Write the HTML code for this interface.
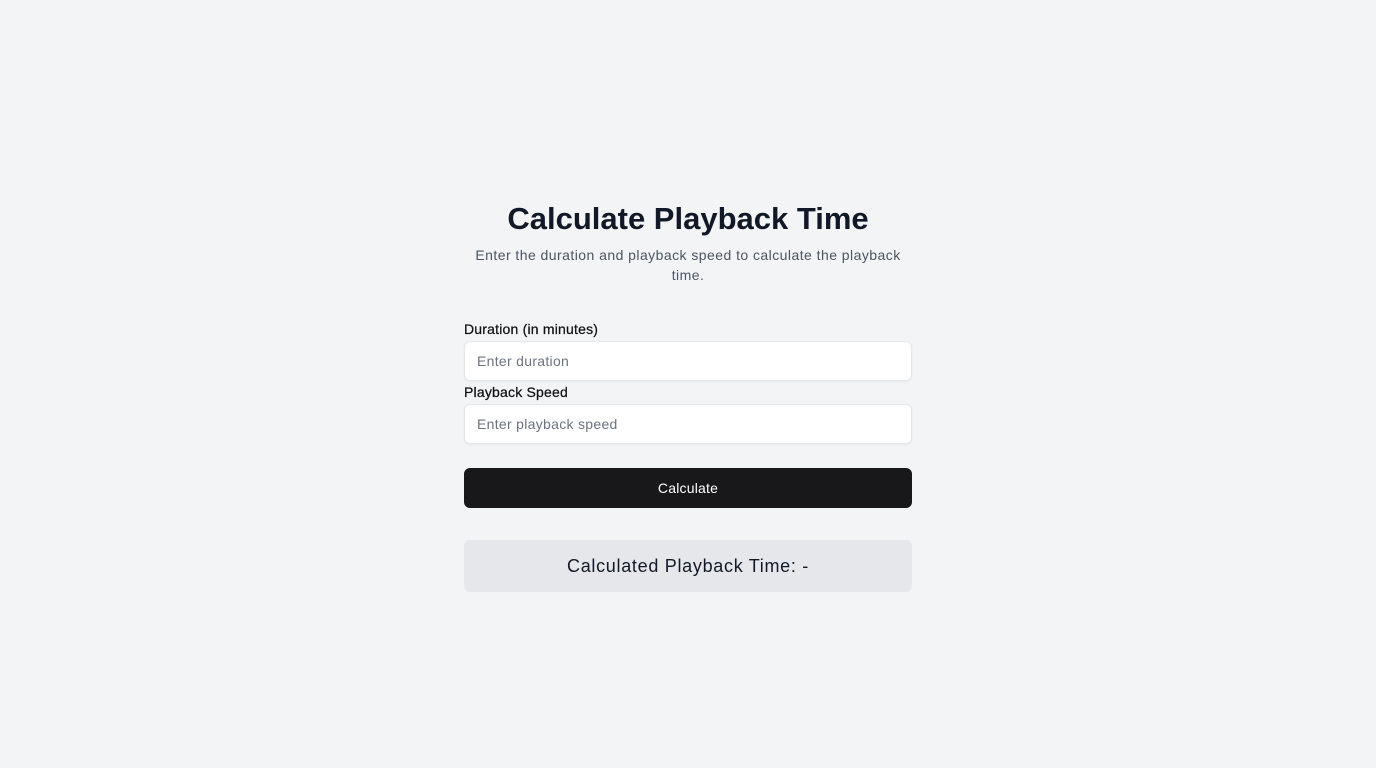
<!DOCTYPE html>
<html><head><style>
*{margin:0;padding:0;box-sizing:border-box}
body{width:1376px;height:768px;background:#f3f4f6;font-family:"Liberation Sans",sans-serif;position:relative;overflow:hidden}
.a{position:absolute;left:464px;width:448px}
h1{position:absolute;left:464px;width:448px;top:200px;text-align:center;font-size:31px;font-weight:bold;color:#111827;line-height:38px;letter-spacing:0px}
.sub{top:245px;text-align:center;font-size:14px;line-height:20px;color:#4b5563;left:470px;width:436px;letter-spacing:0.45px}
.lbl{font-size:14px;color:#111;line-height:20px;letter-spacing:0.2px;-webkit-text-stroke:0.25px #111}
.in{height:40px;background:#fff;border:1px solid #e5e7eb;border-radius:6px;box-shadow:0 1px 2px rgba(0,0,0,.05);font-size:14px;color:#6b7280;padding:0 12px;line-height:38px;letter-spacing:0.3px}
.btn{top:468px;height:40px;background:#18181b;border-radius:6px;color:#fff;font-size:14px;text-align:center;line-height:40px;letter-spacing:0.2px}
.res{top:540px;height:52px;background:#e5e7eb;border-radius:6px;text-align:center;line-height:52px;font-size:18px;color:#111827;letter-spacing:0.7px}
</style></head><body>
<h1>Calculate Playback Time</h1>
<div class="a sub">Enter the duration and playback speed to calculate the playback time.</div>
<div class="a lbl" style="top:319px">Duration (in minutes)</div>
<div class="a in" style="top:341px">Enter duration</div>
<div class="a lbl" style="top:382px">Playback Speed</div>
<div class="a in" style="top:404px">Enter playback speed</div>
<div class="a btn">Calculate</div>
<div class="a res">Calculated Playback Time: -</div>
</body></html>
